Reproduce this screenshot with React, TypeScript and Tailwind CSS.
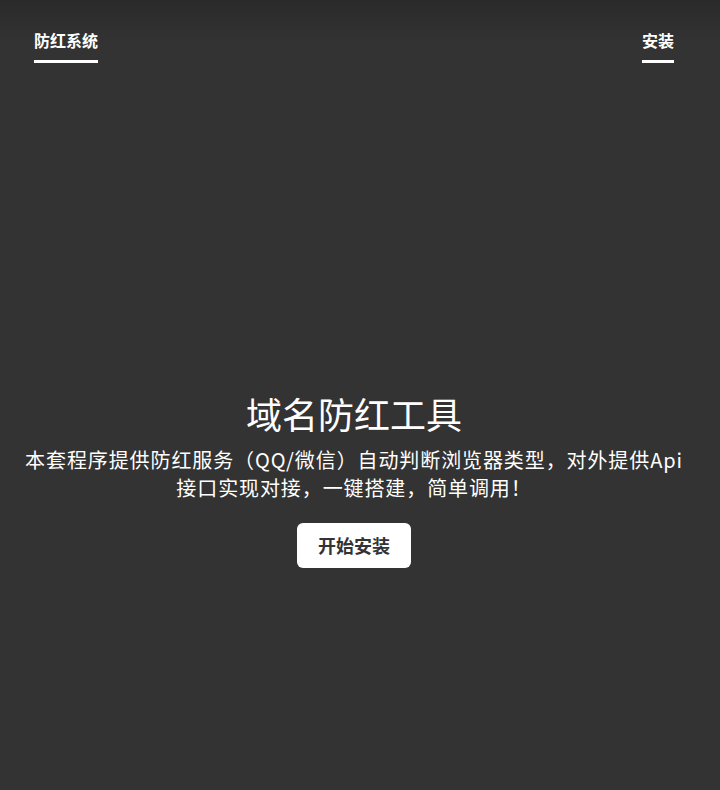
const font = 'font-["Noto_Sans_CJK_SC","Noto_Sans",sans-serif]'

function NavLink({ label }: { label: string }) {
  return (
    <a className="block border-b-[3px] border-white pb-[9px] text-base font-bold leading-[22px] text-white">
      {label}
    </a>
  )
}

export default function App() {
  return (
    <div
      className={`${font} flex h-[790px] flex-col bg-[#333] bg-[linear-gradient(to_bottom,#2a2a2a,#333_44px)] pr-[12px] text-white`}
    >
      <header className="flex items-start justify-between px-[34px] pt-[29px]">
        <NavLink label="防红系统" />
        <NavLink label="安装" />
      </header>

      <main className="flex flex-col items-center px-4 pt-[329px] text-center">
        <h1 className="text-[36px] font-normal leading-[43px]">域名防红工具</h1>
        <p className="mt-[11px] text-[20px] font-normal leading-[28px] tracking-[0.9px]">
          本套程序提供防红服务（QQ/微信）自动判断浏览器类型，对外提供Api
          <br />
          接口实现对接，一键搭建，简单调用！
        </p>
        <button className="mt-[21px] h-[45px] w-[114px] rounded-md bg-white text-[18px] font-bold text-[#333]">
          开始安装
        </button>
      </main>
    </div>
  )
}
